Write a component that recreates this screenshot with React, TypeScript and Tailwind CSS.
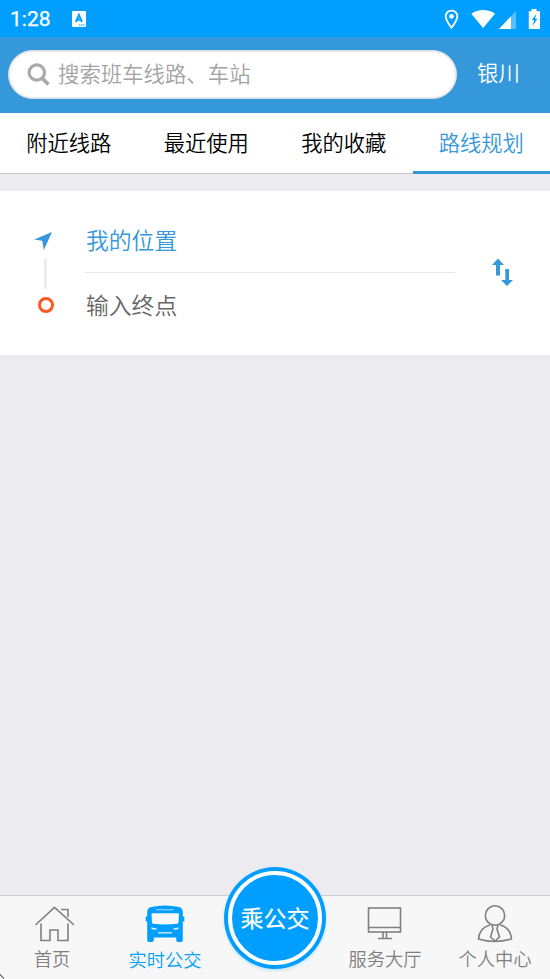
import type { ReactNode } from 'react';

const tabs = ['附近线路', '最近使用', '我的收藏', '路线规划'];

function StatusBar() {
  return (
    <div className="flex h-[37px] items-center bg-[#009fff] text-white">
      <span className="ml-[10px] mt-[2px] w-[62px] font-[Roboto] text-[21px] font-normal leading-none [-webkit-text-stroke:0.25px_white]">1:28</span>
      <svg width="14" height="16" viewBox="0 0 14 16" className="mt-px">
        <rect width="14" height="16" rx="1.2" fill="#fff" />
        <path d="M3.8 11 6.9 3.8 10 11M4.9 8.7h4" fill="none" stroke="#009fff" strokeWidth="1.9" />
        <path d="M7 14h6" stroke="#009fff" strokeWidth="1" strokeDasharray="1.5 .5" />
      </svg>
      <svg width="104" height="24" viewBox="444 6 104 24" className="ml-auto mr-[2px]">
        <path d="M451.5 9.6c-3.3 0-5.8 2.5-5.8 5.7 0 4.1 5.8 11.3 5.8 11.3s5.8-7.2 5.8-11.3c0-3.2-2.5-5.7-5.8-5.7Z" fill="none" stroke="#fff" strokeWidth="1.8" />
        <circle cx="451.5" cy="15.3" r="2.4" fill="#fff" />
        <path d="M471.3 12.7c7-4.900 16.800-4.900 23.700 0L483.100 27Z" fill="#fff" />
        <path d="M516 10v18h-17Z" fill="#fff" fillOpacity=".35" />
        <path d="M511 15.300V28h-12Z" fill="#fff" />
        <path d="M531.500 8h5v2.300h3.500V28h-11.200V10.300h2.700Z" fill="#fff" />
        <path d="m536.300 13-4.600 6h2.500l-1.700 6 5-7.200h-2.500Z" fill="#009fff" />
      </svg>
    </div>
  );
}

function Header() {
  return (
    <header className="flex h-[76px] items-start bg-[#3598db] pl-2 pt-[13px]">
      <div className="flex h-[49px] w-[449px] items-center rounded-full border border-[#d4dfe8] bg-white pl-[18px] shadow-[inset_0_0_1px_1px_#e8e8e8]">
        <svg width="24" height="24" viewBox="0 0 24 24" fill="none" stroke="#aaa" className="mt-px">
          <circle cx="9.800" cy="9.500" r="7.700" strokeWidth="3.200" />
          <path d="m15.500 15.500 6 6" strokeWidth="3.800" />
        </svg>
        <span className="-mt-[4px] ml-[7px] text-[21.4px] font-[350] leading-none text-[#a3a3a3]">搜索班车线路、车站</span>
      </div>
      <span className="ml-5 mt-[11px] text-[21.4px] font-[350] leading-none text-white">银川</span>
    </header>
  );
}

function RoutePanel() {
  return (
    <section className="mt-[17px] flex h-[164px] bg-white">
      <div className="flex w-[85px] flex-col items-start pt-[40px]">
        <svg width="19" height="20" viewBox="0 0 19 20" className="ml-[34px]">
          <path d="M18 1 9.800 19 8.300 9.800.2 8.500Z" fill="#3598db" />
        </svg>
        <div className="ml-[44px] mt-2 h-[30px] w-[3px] bg-[#ededed]" />
        <div className="ml-[38px] mt-2 size-4 rounded-full border-[3px] border-[#ff5722]" />
      </div>
      <div className="w-[370px] pt-4">
        <div className="flex h-[66px] items-center border-b border-[#e5e5e5] pl-px pt-px text-[22.800px] font-[350] leading-none text-[#3598db]">我的位置</div>
        <div className="flex h-[64px] items-center pl-px text-[22.800px] font-[350] leading-none text-[#666]">输入终点</div>
      </div>
      <svg width="22" height="28" viewBox="0 0 22 28" className="ml-[37px] mt-[67px]" fill="#3598db">
        <path d="M6 .5 12 7H8V17.500H4V7H0Z" />
        <path d="M13.300 11h3.700v11h4l-6 6-6-6h4.300Z" />
      </svg>
    </section>
  );
}

function NavItem({ label, active, children }: { label: string; active?: boolean; children: ReactNode }) {
  return (
    <div className={`flex w-[110px] flex-col items-center ${active ? 'text-[#009fff]' : 'text-[#808080]'}`}>
      <svg width="44" height="42" viewBox="0 0 44 42" className="mt-[7px]" fill="none" stroke="currentColor" strokeWidth="1.6">{children}</svg>
      <span className={`text-[18.300px] font-[350] leading-none ${active ? 'mt-[5px]' : 'mt-[4px]'}`}>{label}</span>
    </div>
  );
}

function BottomNav() {
  return (
    <nav className="relative mt-auto flex h-[84px] border-t border-[#cfcfd3] bg-[#f7f7f7]">
      <div className="-ml-[3px] flex">
        <NavItem label="首页">
          <path d="m5.500 22 19-17.700L44 22M11 20.500v17h9V27h8v10.500h10v-17M31 6.500h7V14" />
        </NavItem>
      </div>
      <div className="ml-[3px] flex">
        <NavItem label="实时公交" active>
          <path d="M8 4Q22 .8 36 4q3.800 1 3.800 5V36.500q0 2.500-1.500 2.500H35q-1.800 0-1.800-2v-2.500H10.800V37q0 2-1.800 2H5.700q-1.500 0-1.500-2.500V9q0-4 3.800-5Z" fill="currentColor" stroke="none" />
          <path d="M3.800 13.500v5M40.200 13.500v5" strokeWidth="2.200" />
          <path d="M9.500 10.200h25.500q1 0 1 1l-.5 8.300q0 1-1 1.200-12.500 1.600-24.500 0-1-.2-1-1.200l-.5-8.300q0-1 1-1Z" fill="#f7f7f7" stroke="none" />
          <path d="M13 6.800h18" stroke="#a7dcff" strokeWidth="1" />
          <path d="m8.500 24.800 5 1.300h-4ZM35.500 24.800l-5 1.300h4Z" fill="#f7f7f7" stroke="#f7f7f7" strokeWidth=".8" />
          <path d="M15 29.800h14" stroke="#d5efff" strokeWidth="1.300" />
        </NavItem>
      </div>
      <div className="w-[110px]" />
      <NavItem label="服务大厅">
        <rect x="5.500" y="5" width="32" height="24" />
        <path d="M5.500 24.500h32M20 29v6.500M23.500 29v6.500M15 35.500h14" />
      </NavItem>
      <NavItem label="个人中心">
        <circle cx="22" cy="12.500" r="9.700" />
        <path d="M17 22C9 24 6 30 5.500 36c10 3 23 3 33 0C38 30 35 24 27 22M19 22l1 4-2.500 8 4.500 4 4.500-4L24 26l1-4" />
      </NavItem>
      <div className="absolute left-[224px] top-[-29px] flex size-[102px] items-center justify-center rounded-full bg-[#009fff] shadow-[0_2px_3px_#009fff30]">
        <div className="flex size-[94px] items-center justify-center rounded-full border-4 border-white pb-px text-[23px] font-normal leading-none text-white [-webkit-text-stroke:0.2px_white]">乘公交</div>
      </div>
      <svg width="5" height="5" viewBox="0 0 5 5" className="absolute bottom-0 left-0"><path d="M0 1h1v1h1v1h1v1h1" fill="none" stroke="#111" strokeDasharray="1 1" /></svg>
    </nav>
  );
}

export default function App() {
  return (
    <div className="flex h-[979px] w-[550px] flex-col overflow-hidden bg-[#ebebf0] font-['Noto_Sans_CJK_SC',sans-serif]">
      <StatusBar />
      <Header />
      <div className="flex h-[61px] border-b border-[#c8c8cb] bg-white text-[21.300px] leading-none">
        {tabs.map((tab, index) => (
          <div
            key={tab}
            className={`flex h-[61px] flex-1 items-center justify-center border-b-[3px] pb-px font-[350] ${index === 3 ? 'border-[#3598db] text-[#3598db]' : 'border-transparent text-black'}`}
          >
            {tab}
          </div>
        ))}
      </div>
      <RoutePanel />
      <BottomNav />
    </div>
  );
}
